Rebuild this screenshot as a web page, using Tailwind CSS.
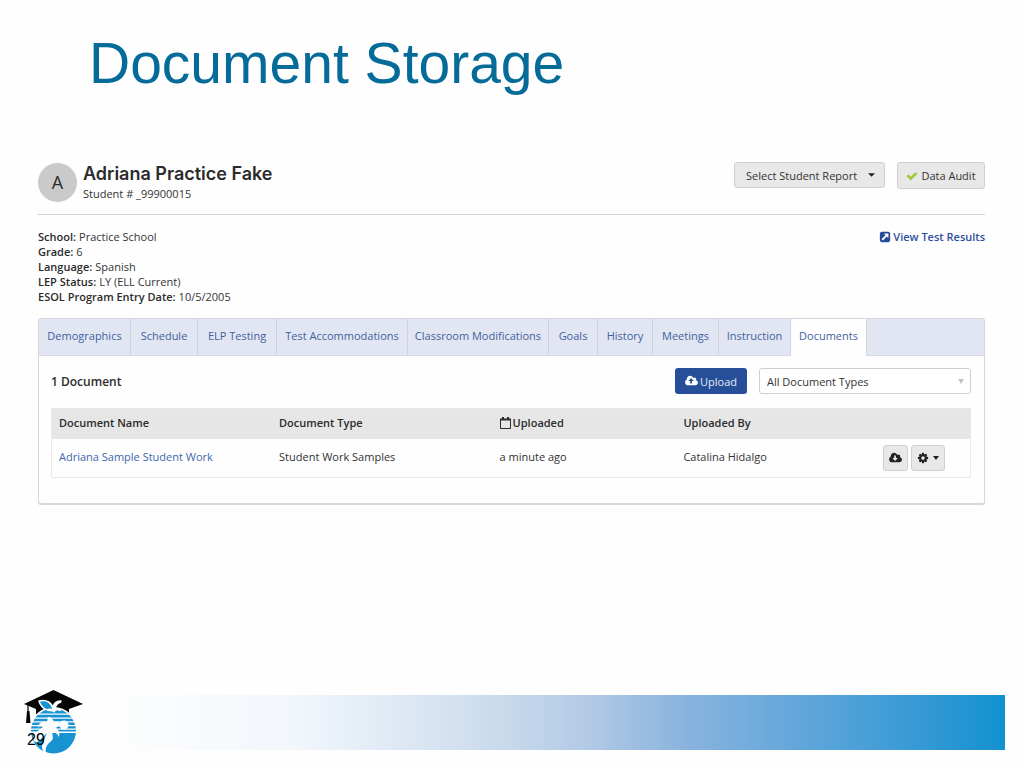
<!DOCTYPE html>
<html lang="en">
<head>
<meta charset="utf-8">
<meta name="viewport" content="width=device-width, initial-scale=1">
<title>Document Storage</title>
<script src="https://cdn.jsdelivr.net/npm/@tailwindcss/browser@4"></script>
</head>
<body class="bg-[#fefefe]">
<div class="flex min-h-screen flex-col font-['Open_Sans','Liberation_Sans',sans-serif] text-[11px] leading-[15px] text-[#333]">
  <h1 class="px-[89px] pt-[30px] font-['Liberation_Sans',sans-serif] text-[57px] leading-[66px] text-[#056b98]">Document Storage</h1>

  <main class="mt-[66px] pr-[39px] pl-[38px]">
    <header class="flex items-start border-b border-[#d2d2d2] pb-3">
      <div class="mt-px flex size-[39px] items-center justify-center rounded-full bg-[#cacaca] pb-0.5 text-lg text-[#2b2b2b]">A</div>
      <div class="ml-1.5">
        <h2 class="font-['Inter',sans-serif] text-[18px] leading-6 font-semibold text-[#2b2b2b]">Adriana Practice Fake</h2>
        <p>Student # _99900015</p>
      </div>
      <div class="ml-auto flex items-start gap-3">
        <button class="flex h-[26px] w-[151px] items-center justify-between rounded-[3px] border border-[#cfcfcf] bg-[#e8e8e8] pr-[9px] pl-[11px]">
          Select Student Report
          <svg class="h-1 w-[7px]" viewBox="0 0 8 4" fill="#222"><path d="M0 0h8L4 4z"/></svg>
        </button>
        <button class="flex h-[27px] w-[88px] items-center justify-center gap-[3px] rounded-[3px] border border-[#cfcfcf] bg-[#e8e8e8]">
          <svg class="size-3" viewBox="0 0 1792 1792" fill="#9fc63b"><path d="M1671 566q0 40-28 68l-724 724-136 136q-28 28-68 28t-68-28l-136-136-362-362q-28-28-28-68t28-68l136-136q28-28 68-28t68 28l294 295 656-657q28-28 68-28t68 28l136 136q28 28 28 68z"/></svg>
          Data Audit
        </button>
      </div>
    </header>

    <section class="mt-[14px] flex items-start justify-between">
      <dl>
        <div class="flex gap-[3px]"><dt class="font-semibold text-[#2b2b2b]">School:</dt><dd>Practice School</dd></div>
        <div class="flex gap-[3px]"><dt class="font-semibold text-[#2b2b2b]">Grade:</dt><dd>6</dd></div>
        <div class="flex gap-[3px]"><dt class="font-semibold text-[#2b2b2b]">Language:</dt><dd>Spanish</dd></div>
        <div class="flex gap-[3px]"><dt class="font-semibold text-[#2b2b2b]">LEP Status:</dt><dd>LY (ELL Current)</dd></div>
        <div class="flex gap-[3px]"><dt class="font-semibold text-[#2b2b2b]">ESOL Program Entry Date:</dt><dd>10/5/2005</dd></div>
      </dl>
      <a href="#" class="flex items-center gap-0.5 font-semibold text-[#2f4f9e]">
        <svg class="size-3" viewBox="0 0 1792 1792" fill="#264c98"><path d="M1408 928v-480q0-26-19-45t-45-19h-480q-42 0-59 39-17 41 14 70l144 144-534 534q-19 19-19 45t19 45l102 102q19 19 45 19t45-19l534-534 144 144q18 19 45 19 12 0 25-5 39-17 39-59zm256-512v960q0 119-84.5 203.5t-203.5 84.5h-960q-119 0-203.5-84.5t-84.5-203.5v-960q0-119 84.5-203.5t203.5-84.5h960q119 0 203.5 84.5t84.5 203.5z"/></svg>
        View Test Results
      </a>
    </section>

    <section class="mt-[14px] overflow-hidden rounded-[3px] border border-b-2 border-[#d5d6de]">
      <nav class="flex h-[37px] border-b border-[#d5d9e6] bg-[#e2e6f2] text-center leading-[34px] text-[#41629f]">
        <a href="#" class="w-[92px] border-r border-[#ced3df]">Demographics</a>
        <a href="#" class="w-[67px] border-r border-[#ced3df]">Schedule</a>
        <a href="#" class="w-[79px] border-r border-[#ced3df]">ELP Testing</a>
        <a href="#" class="w-[131px] border-r border-[#ced3df]">Test Accommodations</a>
        <a href="#" class="w-[141px] border-r border-[#ced3df]">Classroom Modifications</a>
        <a href="#" class="w-[49px] border-r border-[#ced3df]">Goals</a>
        <a href="#" class="w-[55px] border-r border-[#ced3df]">History</a>
        <a href="#" class="w-[66px] border-r border-[#ced3df]">Meetings</a>
        <a href="#" class="w-[72px] border-r border-[#ced3df]">Instruction</a>
        <a href="#" aria-current="page" class="h-[37px] w-[76px] border-r border-[#d5d9e6] bg-[#fefefe]">Documents</a>
      </nav>

      <div class="pr-[13px] pl-3 pt-3 pb-[25px]">
        <div class="flex items-center">
          <h3 class="text-[12px] font-semibold text-[#2b2b2b]">1 Document</h3>
          <button class="ml-auto flex h-[26px] w-[72px] items-center justify-center gap-0.5 rounded-[3px] bg-[#274f99] text-[#e3eaf7]">
            <svg class="h-3 w-[13px]" viewBox="0 0 1920 1792" fill="#fff"><path d="M1280 864q0-14-9-23l-352-352q-9-9-23-9t-23 9l-351 351q-10 12-10 24 0 14 9 23t23 9h224v352q0 13 9.5 22.5t22.5 9.5h192q13 0 22.5-9.5t9.5-22.5v-352h224q13 0 22.5-9.5t9.5-22.5zm640 288q0 159-112.5 271.5t-271.5 112.5h-1088q-185 0-316.5-131.5t-131.5-316.5q0-130 70-240t188-165q-2-30-2-43 0-212 150-362t362-150q156 0 285.5 87t188.5 231q71-62 166-62 106 0 181 75t75 181q0 76-41 138 130 31 213.5 135.5t83.5 238.5z"/></svg>
            Upload
          </button>
          <div class="relative ml-3 w-[212px]">
            <select aria-label="Document type" class="block h-[26px] w-full appearance-none rounded-[3px] border border-[#cfcfcf] bg-white pl-[7px] text-[11px] text-[#333]">
              <option>All Document Types</option>
            </select>
            <svg class="pointer-events-none absolute top-[11px] right-[7px] h-[5px] w-1.5" viewBox="0 0 6 5" fill="#c4c4c4"><path d="M0 0h6L3 5z"/></svg>
          </div>
        </div>

        <table class="mt-[14px] w-full table-fixed border border-[#e8e8e8] text-left">
          <colgroup><col class="w-[24%]"><col class="w-[24%]"><col class="w-[20%]"><col class="w-[22%]"><col class="w-[10%]"></colgroup>
          <thead>
            <tr class="h-[30px] bg-[#e6e6e6] text-[#2b2b2b]">
              <th class="pb-0.5 pl-[7px] font-semibold">Document Name</th>
              <th class="pb-0.5 pl-[7px] font-semibold">Document Type</th>
              <th class="pb-0.5 pl-[7px] font-semibold">
                <span class="flex items-center gap-0.5">
                  <svg class="h-3 w-[11px]" viewBox="0 0 11 12" fill="none" stroke="#2b2b2b"><path d="M.5 2.500h10v9H.5z"/><path d="M0 2.500h11M3 0v3M8 0v3" stroke-width="2"/></svg>
                  Uploaded
                </span>
              </th>
              <th class="pb-0.5 pl-[7px] font-semibold">Uploaded By</th>
              <th aria-label="Actions"></th>
            </tr>
          </thead>
          <tbody>
            <tr class="h-[39px]">
              <td class="pb-0.5 pl-[7px]"><a href="#" class="text-[#4165ad]">Adriana Sample Student Work</a></td>
              <td class="pb-0.5 pl-[7px]">Student Work Samples</td>
              <td class="pb-0.5 pl-[7px]">a minute ago</td>
              <td class="pb-0.5 pl-[7px]">Catalina Hidalgo</td>
              <td class="pr-[25px]">
                <div class="flex justify-end gap-[3px]">
                  <button aria-label="Download" class="flex h-[26px] w-[25px] shrink-0 items-center justify-center rounded-[3px] border border-[#cfcfcf] bg-[#e8e8e8]">
                    <svg class="h-3 w-[13px]" viewBox="0 0 1920 1792" fill="#222"><path d="M1280 928q0-14-9-23t-23-9h-224v-352q0-13-9.5-22.5t-22.5-9.5h-192q-13 0-22.5 9.5t-9.5 22.5v352h-224q-13 0-22.5 9.5t-9.5 22.5q0 14 9 23l352 352q9 9 23 9t23-9l351-351q10-12 10-24zm640 224q0 159-112.5 271.5t-271.5 112.5h-1088q-185 0-316.5-131.5t-131.5-316.5q0-130 70-240t188-165q-2-30-2-43 0-212 150-362t362-150q156 0 285.5 87t188.5 231q71-62 166-62 106 0 181 75t75 181q0 76-41 138 130 31 213.5 135.5t83.5 238.5z"/></svg>
                  </button>
                  <button aria-label="Settings" class="flex h-[26px] w-[34px] shrink-0 items-center justify-center gap-1 rounded-[3px] border border-[#cfcfcf] bg-[#e8e8e8]">
                    <svg class="size-3" viewBox="0 0 1792 1792" fill="#222"><path d="M1152 896q0-106-75-181t-181-75-181 75-75 181 75 181 181 75 181-75 75-181zm512-109v222q0 12-8 23t-20 13l-185 28q-19 54-39 91 35 50 107 138 10 12 10 25t-9 23q-27 37-99 108t-94 71q-12 0-26-9l-138-108q-44 23-91 38-16 136-29 186-7 28-36 28h-222q-14 0-24.5-8.5t-11.5-21.5l-28-184q-49-16-90-37l-141 107q-10 9-25 9-14 0-25-11-126-114-165-168-7-10-7-23 0-12 8-23 15-21 51-66.5t54-70.5q-27-50-41-99l-183-27q-13-2-21-12.5t-8-23.5v-222q0-12 8-23t19-13l186-28q14-46 39-92-40-57-107-138-10-12-10-24 0-10 9-23 26-36 98.5-107.5t94.5-71.5q13 0 26 10l138 107q44-23 91-38 16-136 29-186 7-28 36-28h222q14 0 24.5 8.5t11.5 21.5l28 184q49 16 90 37l142-107q9-9 24-9 13 0 25 10 129 119 165 170 7 8 7 22 0 12-8 23-15 21-51 66.5t-54 70.5q26 50 41 98l183 28q13 2 21 12.5t8 23.5z"/></svg>
                    <svg class="h-1 w-1.5" viewBox="0 0 6 4" fill="#222"><path d="M0 0h6L3 4z"/></svg>
                  </button>
                </div>
              </td>
            </tr>
          </tbody>
        </table>
      </div>
    </section>
  </main>

  <footer class="mt-auto flex items-start pr-[19px] pb-3 pl-[22px]">
    <div class="relative h-[66px] w-[62px] shrink-0">
      <!-- Round orange with a palm tree, wearing a mortarboard -->
      <svg class="h-[66px] w-[62px]" viewBox="0 0 62 66">
        <defs><clipPath id="fruit"><circle cx="31.500" cy="41" r="22.500"/></clipPath></defs>
        <path d="M2 14 31.500 0 61 14 47 19v8H14v-8z" fill="#050505"/>
        <path d="M6 15v12" stroke="#050505" stroke-width="1.200"/>
        <path d="M5 21h2.500L8.500 33H4z" fill="#050505"/>
        <circle cx="31.500" cy="41" r="24" fill="#fefefe"/>
        <g clip-path="url(#fruit)" fill="#1793d1">
          <path d="M8 18h48v5.500H8zM8 24.800h48v2.600H8zM8 28.700h48v2.600H8zM8 32.600h48v2.400H8zM8 36.300h48v2.200H8zM8 39.700h48v1.800H8z"/>
          <path d="M8 43h48v23H8z"/>
        </g>
        <path d="M11 43c5-1 7-4 10-6-3-1-4-1-5 1 0-5 4-7 9-6l1-5c3 0 5 2 6 5 4-1 8 1 9 5-3-1-5-1-7 1 3 2 4 5 3 9-2-4-4-5-7-5l1 6c-1 3-3 4-4 5-3 3-4 6-3 10-4-2-5-6-3-11l4-9-8 8c-3 2-5 1-6-2z" fill="#fefefe"/>
        <circle cx="42" cy="35" r="4.500" fill="#fefefe"/>
        <path d="M30 20C26 22 19 18 17 11c8-2 13 2 14 8 0-5 3-8 8-8-4 2-6 5-6 9z" fill="#1793d1" stroke="#fefefe" stroke-width="1.500" stroke-linejoin="round"/>
        <path d="M26 20c2-1 4 0 6 1 1-2 4-2 6-1M32 19c0-4 3-7 6-7" fill="none" stroke="#fefefe" stroke-width="2.500" stroke-linecap="round"/>
      </svg>
      <span class="absolute top-[41px] left-[5px] font-['Liberation_Sans',sans-serif] text-base leading-[18px] text-black">29</span>
    </div>
    <div class="mt-[5px] ml-4 h-[55px] flex-1 bg-[linear-gradient(90deg,#fefefe_0%,#f2f7fc_21%,#e0eaf4_32%,#cadaec_44%,#b2cae6_54%,#8cb4de_64%,#5fa6da_78%,#3598d4_91%,#1292d0_100%)]"></div>
  </footer>
</div>
</body>
</html>
